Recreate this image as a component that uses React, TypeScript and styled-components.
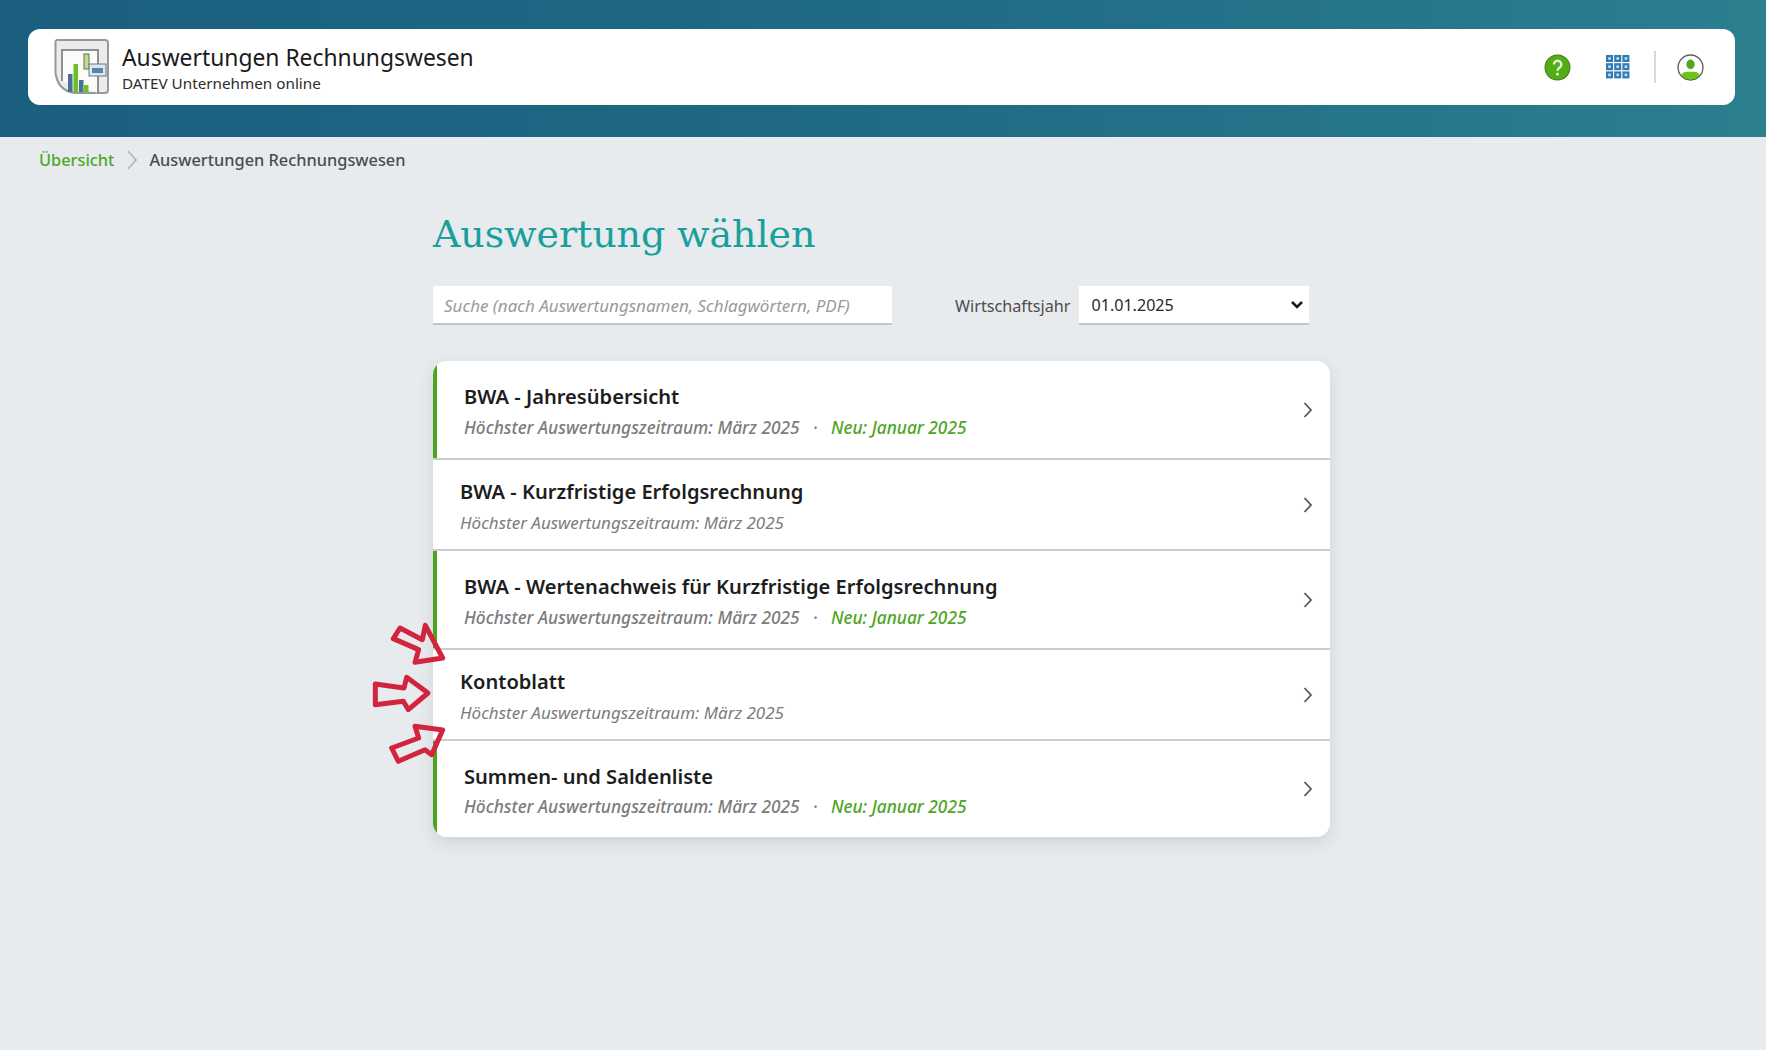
import React from "react";
import styled, { createGlobalStyle } from "styled-components";

const Global = createGlobalStyle`
  html, body { margin: 0; padding: 0; background: #e7ebee; font-family: "Noto Sans", "Open Sans", sans-serif; color: #1c1c1c; }
  * { box-sizing: border-box; }
`;

const Page = styled.div`
  min-height: 1050px;
  background: #e7ebee;
`;
const HeaderBand = styled.header`
  height: 137px;
  padding: 29px 31px 32px 28px;
  background: linear-gradient(90deg, #1a5f7e 0%, #1f6a85 50%, #2b7f8f 100%);
`;
const HeaderCard = styled.div`
  height: 76px;
  background: #fff;
  border-radius: 12px;
  display: flex;
  align-items: center;
  padding: 0 31px 0 26px;
`;
const AppTitles = styled.div`
  margin-left: 12px;
  padding-top: 2px;
  display: flex;
  flex-direction: column;
`;
const AppName = styled.div`
  font-size: 22.85px;
  line-height: 30px;
  color: #1b1b1b;
`;
const AppSub = styled.div`
  font-size: 15.25px;
  line-height: 20px;
  color: #2c2c2c;
`;
const HeaderActions = styled.div`
  margin-left: auto;
  display: flex;
  align-items: center;
`;
const ActionIcon = styled.span`
  display: flex;
  width: 27px;
  height: 27px;
  align-items: center;
  justify-content: center;
  margin-left: ${(p: { $gap: number }) => p.$gap}px;
`;
const Divider = styled.span`
  width: 2px;
  height: 32px;
  background: #d8d8d8;
  margin-left: 23px;
`;
const Crumbs = styled.nav`
  display: flex;
  align-items: center;
  height: 45px;
  padding-left: 39px;
  font-size: 16.35px;
  font-weight: 500;
`;
const CrumbLink = styled.a`
  color: #4ea82a;
`;
const CrumbSep = styled.span`
  display: flex;
  margin: 0 11px 0 12px;
`;
const CrumbCurrent = styled.span`
  color: #4a4d50;
`;
const Main = styled.main`
  margin-left: 433px;
  width: 897px;
  position: relative;
  padding-top: 27px;
`;
const Heading = styled.h1`
  margin: 0;
  font-family: "DejaVu Serif", serif;
  font-weight: 400;
  font-size: 38px;
  line-height: 50px;
  letter-spacing: -0.1px;
  color: #1a9f9d;
`;
const Filters = styled.div`
  display: flex;
  align-items: center;
  margin-top: 27px;
`;
const Search = styled.input`
  width: 459px;
  height: 39px;
  background: #fff;
  border: 0;
  border-bottom: 2px solid #c3c6c8;
  padding: 2px 11px 0;
  font: italic 17px "Noto Sans", sans-serif;
  outline: none;
  &::placeholder { color: #9a9a9a; opacity: 1; }
`;
const FilterLabel = styled.label`
  margin-left: 63px;
  padding-top: 1px;
  font-size: 16.2px;
  color: #4c4c4c;
`;
const SelectWrap = styled.span`
  position: relative;
  display: flex;
  margin-left: 9px;
`;
const YearSelect = styled.select`
  appearance: none;
  width: 230px;
  height: 39px;
  background: #fff;
  border: 0;
  border-bottom: 2px solid #c3c6c8;
  padding: 0 11px 0 12px;
  font: 16.1px "Noto Sans", sans-serif;
  color: #2a2a2a;
  outline: none;
`;
const SelectCaret = styled.svg`
  position: absolute;
  right: 5px;
  top: 14px;
  pointer-events: none;
`;
const List = styled.ul`
  list-style: none;
  margin: 0;
  padding: 0;
  background: #fff;
  border-radius: 14px;
  overflow: hidden;
`;
const ListShadow = styled.div`
  margin-top: 36px;
  border-radius: 14px;
  box-shadow: 0 6px 16px rgba(60, 70, 80, 0.14);
`;
const Row = styled.li`
  border-bottom: 2px solid #cbcdcf;
  &:last-child { border-bottom: 0; }
`;
const RowBody = styled.div<{ $isNew: boolean; $h: number }>`
  height: ${(p) => p.$h}px;
  border-left: ${(p) => (p.$isNew ? "4px solid #4fa41f" : "0")};
  padding: 0 17px 0 27px;
  display: flex;
  align-items: center;
  justify-content: space-between;
`;
const RowTexts = styled.div`
  display: flex;
  flex-direction: column;
  gap: 5.5px;
  padding-top: 3px;
`;
const RowTitle = styled.div`
  font-size: 20.1px;
  line-height: 27px;
  font-weight: 600;
  color: #1d1d1d;
`;
const RowMeta = styled.div<{ $isNew: boolean }>`
  font-size: ${(p) => (p.$isNew ? 17.3 : 17)}px;
  line-height: 23px;
  font-style: italic;
  font-weight: ${(p) => (p.$isNew ? 500 : 400)};
  color: #7c7c7c;
  display: flex;
`;
const MetaNew = styled.span`
  font-weight: 500;
  color: #4ea51f;
`;
const MetaDot = styled.span`
  margin: 0 13.5px;
`;
const Arrows = styled.svg`
  position: absolute;
  left: -73px;
  top: 416px;
  pointer-events: none;
`;

const rows = [
  { title: "BWA - Jahresübersicht", isNew: true, h: 97 },
  { title: "BWA - Kurzfristige Erfolgsrechnung", isNew: false, h: 89 },
  { title: "BWA - Wertenachweis für Kurzfristige Erfolgsrechnung", isNew: true, h: 97 },
  { title: "Kontoblatt", isNew: false, h: 89 },
  { title: "Summen- und Saldenliste", isNew: true, h: 96 },
];

const Logo = () => (
  <svg width="56" height="56" viewBox="0 0 56 56">
    <path d="M3 1h48a3 3 0 0 1 3 3v47a3 3 0 0 1-3 3H21Q4 52 1.500 34V3a2 2 0 0 1 1.500-2z" fill="#ebebe8" stroke="#969a97" strokeWidth="2" />
    <path d="M8 42V11h36v43" fill="#fbfbfb" stroke="#6d7272" strokeWidth="1.500" />
    <rect x="14" y="35" width="4.500" height="18" fill="#46709a" />
    <rect x="19.500" y="25" width="4.500" height="28" fill="#6fc01f" />
    <rect x="25" y="41" width="4.500" height="12" fill="#46709a" />
    <rect x="30" y="46" width="4.500" height="7" fill="#6fc01f" />
    <rect x="30" y="15" width="5" height="15" fill="#c3d99a" stroke="#5d7a3a" />
    <rect x="35" y="25" width="17" height="12" fill="#dfe5e8" stroke="#6a7c88" />
    <rect x="38" y="29" width="11" height="5" fill="#4f86b3" />
  </svg>
);

const HelpIcon = () => (
  <svg width="27" height="27" viewBox="0 0 26 26">
    <circle cx="13" cy="13" r="12" fill="#52ae14" stroke="#3c7a1a" strokeWidth="1" />
    <path d="M9.500 10a3.600 3.600 0 1 1 5.500 3.100c-1.300.9-2 1.500-2 3" fill="none" stroke="#e9f5df" strokeWidth="2.200" />
    <circle cx="13" cy="19.500" r="1.400" fill="#e9f5df" />
  </svg>
);

const GridIcon = () => (
  <svg width="24" height="24" viewBox="0 0 24 24">
    {[0, 8.2, 16.4].flatMap((y) =>
      [0, 8.2, 16.4].map((x) => (
        <rect key={`${x}-${y}`} x={x + 1.1} y={y + 1.1} width="4.800" height="4.800" fill="#c9deee" stroke="#2f7ab3" strokeWidth="2.200" />
      ))
    )}
  </svg>
);

const UserIcon = () => (
  <svg width="27" height="27" viewBox="0 0 26 26">
    <defs>
      <clipPath id="userClip">
        <circle cx="13" cy="13" r="11.500" />
      </clipPath>
    </defs>
    <circle cx="13" cy="13" r="12" fill="#fff" stroke="#5d5d5d" strokeWidth="1.300" />
    <g clipPath="url(#userClip)">
      <ellipse cx="13" cy="10" rx="4" ry="4.600" fill="#52a81c" />
      <path d="M4 26v-5q1-4 6-4h6q5 0 6 4v5z" fill="#6cc514" />
    </g>
  </svg>
);

const CrumbChevron = () => (
  <svg width="12" height="20" viewBox="0 0 12 20">
    <path d="M2 1l8 9-8 9" fill="none" stroke="#b5b8ba" strokeWidth="1.800" />
  </svg>
);

const Chevron = () => (
  <svg width="10" height="18" viewBox="0 0 10 18">
    <path d="M1.500 2l6.500 7-6.500 7" fill="none" stroke="#55585a" strokeWidth="1.800" />
  </svg>
);

export default function App() {
  return (
    <Page>
      <Global />
      <HeaderBand>
        <HeaderCard>
          <Logo />
          <AppTitles>
            <AppName>Auswertungen Rechnungswesen</AppName>
            <AppSub>DATEV Unternehmen online</AppSub>
          </AppTitles>
          <HeaderActions>
            <ActionIcon $gap={0}><HelpIcon /></ActionIcon>
            <ActionIcon $gap={33}><GridIcon /></ActionIcon>
            <Divider />
            <ActionIcon $gap={21}><UserIcon /></ActionIcon>
          </HeaderActions>
        </HeaderCard>
      </HeaderBand>
      <Crumbs>
        <CrumbLink>Übersicht</CrumbLink>
        <CrumbSep><CrumbChevron /></CrumbSep>
        <CrumbCurrent>Auswertungen Rechnungswesen</CrumbCurrent>
      </Crumbs>
      <Main>
        <Heading>Auswertung wählen</Heading>
        <Filters>
          <Search placeholder="Suche (nach Auswertungsnamen, Schlagwörtern, PDF)" />
          <FilterLabel>Wirtschaftsjahr</FilterLabel>
          <SelectWrap>
            <YearSelect defaultValue="01.01.2025">
              <option>01.01.2025</option>
            </YearSelect>
            <SelectCaret width="14" height="10" viewBox="0 0 14 10">
              <path d="M2 2l5 5 5-5" fill="none" stroke="#1a1a1a" strokeWidth="2.600" />
            </SelectCaret>
          </SelectWrap>
        </Filters>
        <ListShadow>
          <List>
            {rows.map((r) => (
              <Row key={r.title}>
                <RowBody $isNew={r.isNew} $h={r.h}>
                  <RowTexts>
                    <RowTitle>{r.title}</RowTitle>
                    <RowMeta $isNew={r.isNew}>
                      Höchster Auswertungszeitraum: März 2025
                      {r.isNew && (
                        <>
                          <MetaDot>·</MetaDot>
                          <MetaNew>Neu: Januar 2025</MetaNew>
                        </>
                      )}
                    </RowMeta>
                  </RowTexts>
                  <Chevron />
                </RowBody>
              </Row>
            ))}
          </List>
        </ListShadow>
        <Arrows width="300" height="200" viewBox="0 0 900 600">
          <g fill="none" stroke="#d3243f" strokeWidth="15" strokeLinejoin="round">
            <path d="M100 122L120 90L187 125L196 82L248 180L165 193L176 155Z" />
            <path d="M46 258L46 320L130 310L145 335L204 285L140 238L132 270Z" />
            <path d="M95 450L115 490L195 455L215 470L248 396L165 385L176 420Z" />
          </g>
        </Arrows>
      </Main>
    </Page>
  );
}
